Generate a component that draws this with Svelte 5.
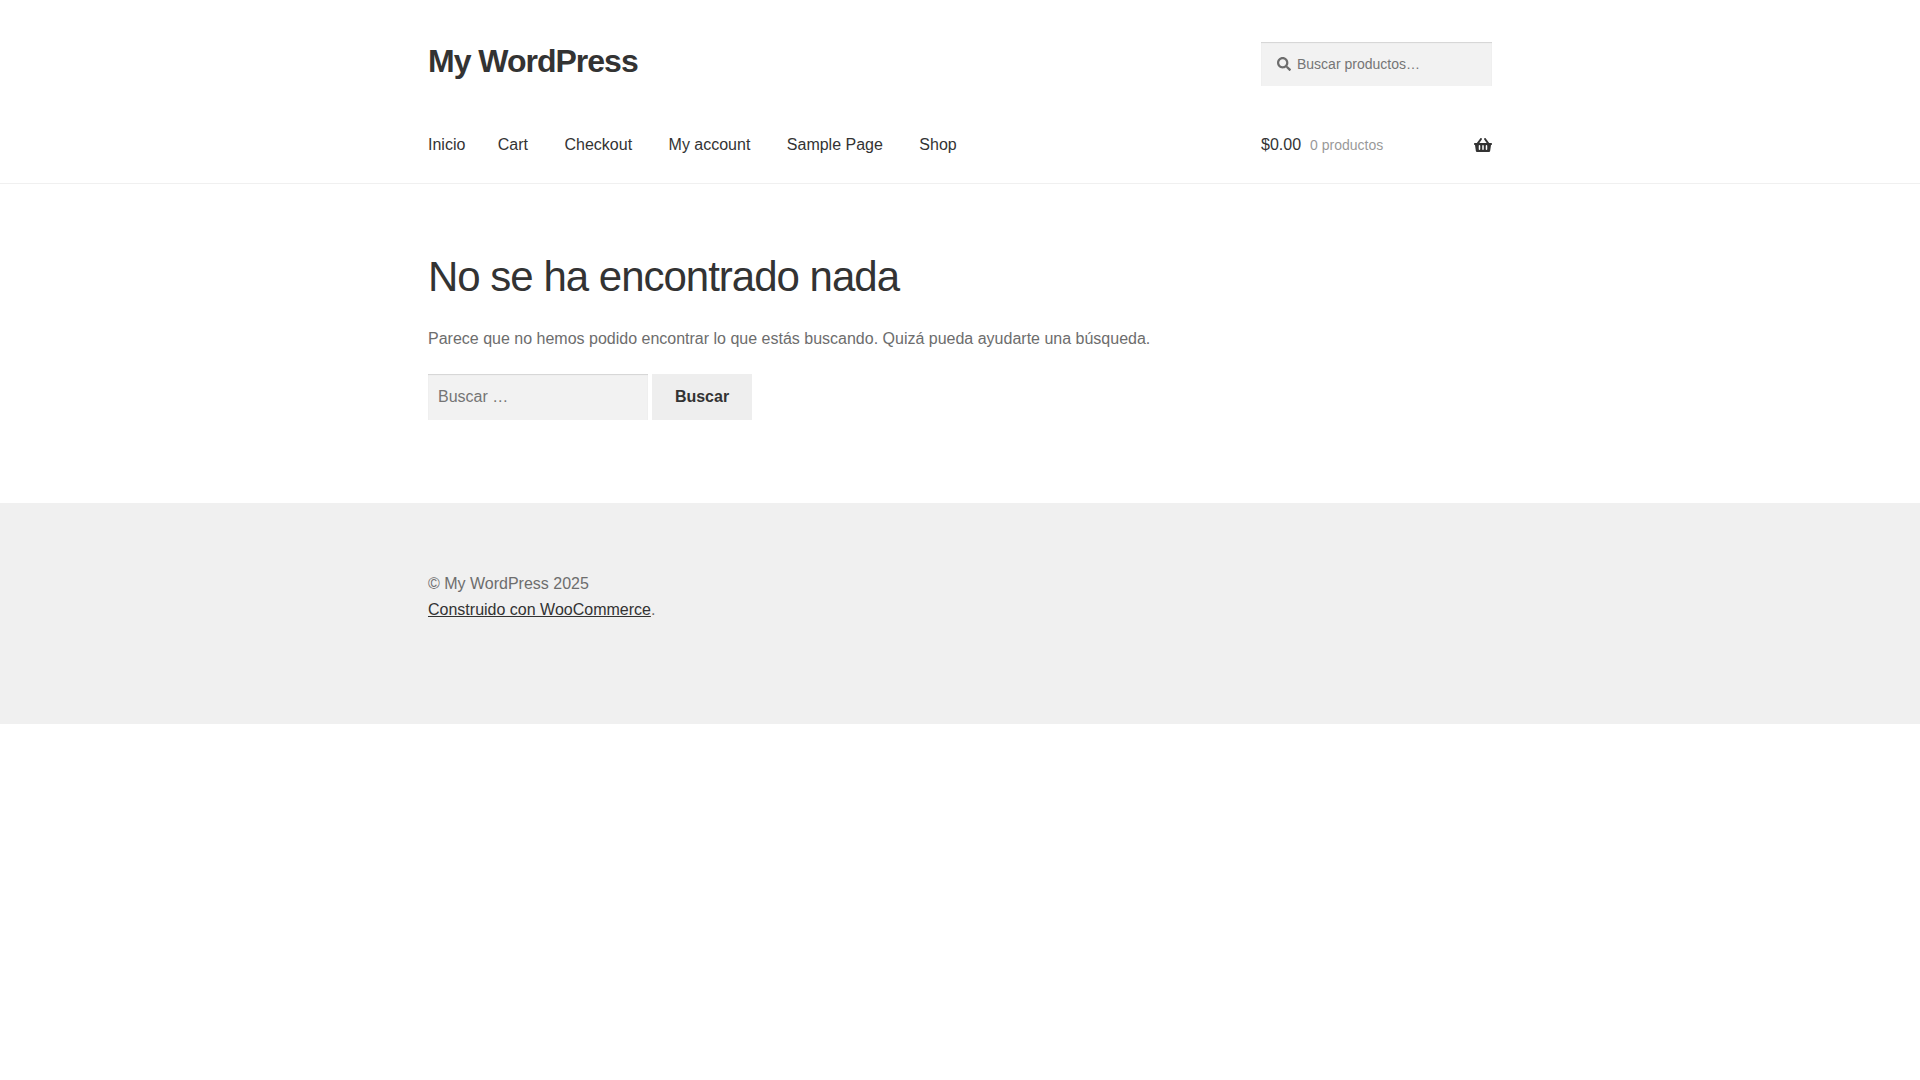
<script>
  let productSearch = '';
  let search = '';

  let cart = {
    total: '$0.00',
    count: '0 productos',
  };
</script>

<header class="site-header">
  <div class="container">
    <div class="header-row">
      <a class="site-title" href="/">My WordPress</a>
      <form class="product-search" role="search" on:submit|preventDefault>
        <label for="product-search" aria-label="Buscar productos">
          <svg viewBox="0 0 512 512" aria-hidden="true">
            <path d="M505 442.7L405.3 343c-4.5-4.5-10.6-7-17-7H372c27.6-35.3 44-79.7 44-128C416 93.1 322.9 0 208 0S0 93.1 0 208s93.1 208 208 208c48.3 0 92.7-16.4 128-44v16.3c0 6.4 2.5 12.5 7 17l99.7 99.7c9.4 9.4 24.6 9.4 33.9 0l28.3-28.3c9.4-9.4 9.4-24.6.1-34zM208 336c-70.7 0-128-57.2-128-128 0-70.7 57.2-128 128-128 70.7 0 128 57.2 128 128 0 70.7-57.2 128-128 128z" />
          </svg>
        </label>
        <input type="search" id="product-search" placeholder="Buscar productos…" bind:value={productSearch} />
      </form>
    </div>

    <div class="nav-row">
      <nav aria-label="Navegación principal">
        <ul>
          <li><a href="/">Inicio</a></li>
          <li><a href="/cart">Cart</a></li>
          <li><a href="/checkout">Checkout</a></li>
          <li><a href="/my-account">My account</a></li>
          <li><a href="/sample-page">Sample Page</a></li>
          <li><a href="/shop">Shop</a></li>
        </ul>
      </nav>
      <a class="cart" href="/cart" title="Ver tu carrito de compra">
        <span>{cart.total}</span>
        <span class="count">{cart.count}</span>
        <svg viewBox="0 0 576 512" aria-hidden="true">
          <path d="M576 216v16c0 13.255-10.745 24-24 24h-8l-26.113 182.788C514.509 462.435 494.257 480 470.37 480H105.63c-23.887 0-44.139-17.565-47.518-41.212L32 256h-8c-13.255 0-24-10.745-24-24v-16c0-13.255 10.745-24 24-24h67.341l106.78-146.821c10.395-14.292 30.407-17.453 44.701-7.058 14.293 10.395 17.453 30.408 7.058 44.701L170.477 192h235.046L326.12 82.821c-10.395-14.292-7.234-34.306 7.059-44.701 14.291-10.395 34.306-7.235 44.701 7.058L484.659 192H552c13.255 0 24 10.745 24 24zM312 392V280c0-13.255-10.745-24-24-24s-24 10.745-24 24v112c0 13.255 10.745 24 24 24s24-10.745 24-24zm112 0V280c0-13.255-10.745-24-24-24s-24 10.745-24 24v112c0 13.255 10.745 24 24 24s24-10.745 24-24zm-224 0V280c0-13.255-10.745-24-24-24s-24 10.745-24 24v112c0 13.255 10.745 24 24 24s24-10.745 24-24z" />
        </svg>
      </a>
    </div>
  </div>
</header>

<main class="container">
  <h1>No se ha encontrado nada</h1>
  <p>Parece que no hemos podido encontrar lo que estás buscando. Quizá pueda ayudarte una búsqueda.</p>
  <form class="search-form" role="search" on:submit|preventDefault>
    <input type="search" placeholder="Buscar …" aria-label="Buscar" bind:value={search} />
    <button type="submit">Buscar</button>
  </form>
</main>

<footer class="site-footer">
  <div class="container">
    © My WordPress 2025<br />
    <a href="https://woocommerce.com">Construido con WooCommerce</a>.
  </div>
</footer>

<style>
  :global(body) {
    margin: 0;
    background-color: #fff;
    color: #6d6d6d;
    font-family: Helvetica, Arial, "Liberation Sans", sans-serif;
    font-size: 16px;
    line-height: 26px;
  }

  .container {
    max-width: 1064px;
    margin: 0 auto;
    padding: 0 40px;
  }

  a {
    color: #333;
    text-decoration: none;
  }

  svg {
    display: block;
    fill: currentColor;
  }

  input,
  button {
    box-sizing: border-box;
    margin: 0;
    border: 0;
    border-radius: 0;
    font-family: inherit;
    font-size: 16px;
  }

  input {
    -webkit-appearance: none;
    appearance: none;
    background-color: #f2f2f2;
    color: #43454b;
    box-shadow: inset 0 1px 1px rgba(0, 0, 0, 0.125);
  }

  input::placeholder {
    color: #757575;
  }

  /* Header */
  .site-header {
    padding-top: 42px;
    border-bottom: 1px solid #f0f0f0;
  }

  .header-row,
  .nav-row {
    display: flex;
    justify-content: space-between;
  }

  .site-title {
    font-size: 32px;
    font-weight: bold;
    line-height: 38px;
    letter-spacing: -1px;
  }

  .product-search {
    display: grid;
    align-items: center;
    width: 231px;
  }

  .product-search label,
  .product-search input {
    grid-area: 1 / 1;
  }

  .product-search label {
    z-index: 1;
    width: 14px;
    margin-left: 16px;
    color: #6d6d6d;
  }

  .product-search input {
    width: 100%;
    height: 44px;
    padding: 0 16px 0 36px;
    font-size: 14px;
  }

  .nav-row {
    align-items: center;
    padding: 46px 0 25px;
  }

  nav ul {
    margin: 0;
    padding: 0;
    list-style: none;
  }

  nav li {
    display: inline-block;
  }

  nav li a {
    padding: 0 16px;
  }

  nav li:first-child a {
    padding: 0 12px 0 0;
  }

  .cart {
    display: flex;
    align-items: center;
    gap: 9px;
    width: 231px;
  }

  .cart .count {
    font-size: 14px;
    opacity: 0.5;
  }

  .cart svg {
    width: 18px;
    margin-left: auto;
  }

  /* Content */
  main h1 {
    margin: 0 0 24px;
    padding-top: 68px;
    color: #333;
    font-size: 42px;
    font-weight: normal;
    line-height: 50px;
    letter-spacing: -1px;
  }

  main p {
    margin: 0 0 22px;
  }

  .search-form {
    display: flex;
    gap: 4px;
    padding-bottom: 83px;
  }

  .search-form input {
    width: 220px;
    height: 46px;
    padding: 0 10px;
  }

  .search-form button {
    width: 100px;
    background-color: #eee;
    color: #333;
    font-weight: bold;
    cursor: pointer;
  }

  /* Footer */
  .site-footer {
    padding: 68px 0 101px;
    background-color: #f0f0f0;
  }

  .site-footer a {
    text-decoration: underline;
  }
</style>
